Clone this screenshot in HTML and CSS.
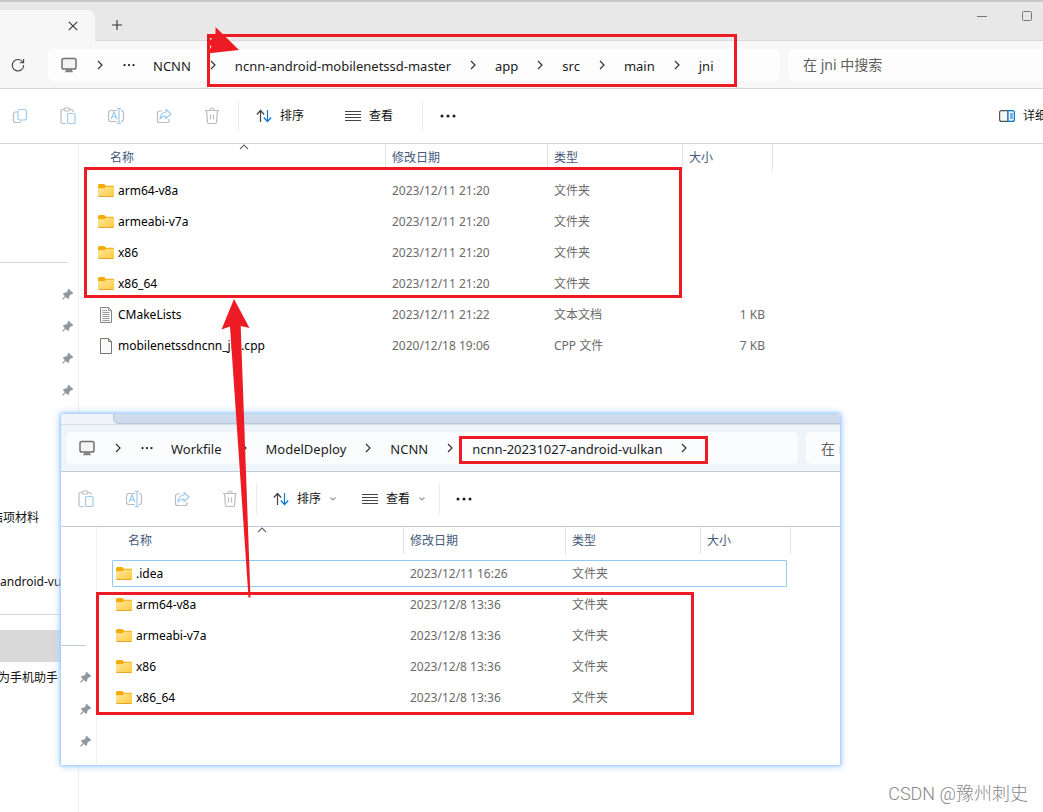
FILE: index.html
```
<!DOCTYPE html>
<html lang="zh-CN">
<head>
<meta charset="utf-8">
<title>jni</title>
<link rel="stylesheet" href="styles.css">
</head>
<body>
<svg class="sprite" aria-hidden="true">
  <defs>
    <linearGradient id="folderFill" x1="0" y1="0" x2="1" y2="1"><stop offset="0" stop-color="#ffe9a0"/><stop offset="1" stop-color="#ffc83a"/></linearGradient>
  </defs>
  <symbol id="chev" viewBox="0 0 8 10"><path d="M2 1l4 4-4 4" fill="none" stroke="#333" stroke-width="1.2"/></symbol>
  <symbol id="down" viewBox="0 0 8 6"><path d="M1.500 1.500l2.500 2.500 2.500-2.500" fill="none" stroke="#999" stroke-width="1.100"/></symbol>
  <symbol id="up" viewBox="0 0 10 6"><path d="M1 5l4-4 4 4" fill="none" stroke="#666" stroke-width="1.100"/></symbol>
  <symbol id="dots" viewBox="0 0 16 4"><g fill="#1c1c1c"><circle cx="2" cy="2" r="1.500"/><circle cx="8" cy="2" r="1.500"/><circle cx="14" cy="2" r="1.500"/></g></symbol>
  <symbol id="monitor" viewBox="0 0 16 16"><rect x="1" y="1.500" width="14" height="10.500" rx="1.800" fill="#f4f4f4" stroke="#707070" stroke-width="1.500"/><path d="M5.500 12.500h5v2h-5zM4 14.800h8" fill="#8a8a8a" stroke="#808080" stroke-width="1.100"/></symbol>
  <symbol id="refresh" viewBox="0 0 14 14"><path d="M12 4.500A5.700 5.700 0 1 0 12.700 7M12.600 1v3.800H8.800" fill="none" stroke="#444" stroke-width="1.100"/></symbol>
  <symbol id="close" viewBox="0 0 10 10"><path d="M.8.8l8.400 8.400M9.200.8L.8 9.200" stroke="#333" stroke-width="1.100"/></symbol>
  <symbol id="plus" viewBox="0 0 10 10"><path d="M5 0v10M0 5h10" stroke="#333" stroke-width="1.100"/></symbol>
  <symbol id="copy" viewBox="0 0 16 16"><path d="M5 4H3.500a2 2 0 0 0-2 2v6.500a2 2 0 0 0 2 2H7a2 2 0 0 0 2-1.800" fill="none" stroke="#bcbcbc" stroke-width="1.200"/><rect x="6" y="1.500" width="8.500" height="10.500" rx="2" fill="#fff" stroke="#9ccbee" stroke-width="1.200"/></symbol>
  <symbol id="paste" viewBox="0 0 16 18"><path d="M6 16.500H2.500A1.500 1.500 0 0 1 1 15V4a1.500 1.500 0 0 1 1.500-1.500h9A1.500 1.500 0 0 1 13 4v1" fill="none" stroke="#bcbcbc" stroke-width="1.200"/><rect x="4" y="1" width="6" height="3" rx="1.500" fill="#fff" stroke="#bcbcbc" stroke-width="1.200"/><rect x="7.500" y="6.500" width="7.500" height="10" rx="1.300" fill="#fff" stroke="#9ccbee" stroke-width="1.200"/></symbol>
  <symbol id="rename" viewBox="0 0 18 18"><path d="M10 3.500H4a2.500 2.500 0 0 0-2.500 2.500v6A2.500 2.500 0 0 0 4 14.500h6M14 3.500a2.500 2.500 0 0 1 2.500 2.500v6a2.500 2.500 0 0 1-2.500 2.500" fill="none" stroke="#bcbcbc" stroke-width="1.200"/><path d="M4 12l3-7 3 7M5.200 9.800h3.600M12 1.500v15M9.800 1.500h4.400M9.800 16.500h4.400" fill="none" stroke="#9ccbee" stroke-width="1.200"/></symbol>
  <symbol id="share" viewBox="0 0 16 16"><path d="M6 3H3.500A2 2 0 0 0 1.500 5v7.500a2 2 0 0 0 2 2h7.500a2 2 0 0 0 2-2V11" fill="none" stroke="#bcbcbc" stroke-width="1.200"/><path d="M10 1.500l5 4.500-5 4.500V8C7 8 5.500 9 4 11c.3-4 2.300-6.700 6-7z" fill="#fff" stroke="#9ccbee" stroke-width="1.200" stroke-linejoin="round"/></symbol>
  <symbol id="trash" viewBox="0 0 16 18"><path d="M1 3.500h14M2.500 3.500l1 11.500a1.500 1.500 0 0 0 1.500 1.500h6a1.500 1.500 0 0 0 1.500-1.500l1-11.500M6 3a2 2 0 0 1 4 0M6.500 7.500v5M9.500 7.500v5" fill="none" stroke="#bcbcbc" stroke-width="1.200"/></symbol>
  <symbol id="sort" viewBox="0 0 16 14"><path d="M4.500 13V2M.8 5.500L4.500 1.500l3.700 4" fill="none" stroke="#444" stroke-width="1.200"/><path d="M11.500 1v11M7.800 8.500l3.700 4 3.700-4" fill="none" stroke="#0a78d0" stroke-width="1.200"/></symbol>
  <symbol id="view" viewBox="0 0 16 12"><path d="M0 1.500h16M0 4.500h16M0 7.500h16M0 10.500h16" stroke="#444"/></symbol>
  <symbol id="pane" viewBox="0 0 16 12"><path d="M9 .600H2.600a2 2 0 0 0-2 2v6.800a2 2 0 0 0 2 2H9z" fill="#f6f6f6" stroke="#555" stroke-width="1.200"/><path d="M9 .600h4.400a2 2 0 0 1 2 2v6.800a2 2 0 0 1-2 2H9z" fill="#e6f3fd" stroke="#0a78d0" stroke-width="1.200"/><path d="M11 4h3M11 6h3M11 8h3" stroke="#0a78d0"/></symbol>
  <symbol id="pin" viewBox="0 0 12 12"><path d="M6.500 1L11 5.200 9.800 6 8.900 5.900 7 8.100 6.800 10 5.900 10.700 3.800 8.600 1 11.400.5 11 3.200 8 1.200 6 2 5.100 4 5 6.100 3.200 5.800 2z" fill="#8c979f" stroke="#8c979f" stroke-width=".6"/></symbol>
  <symbol id="folder" viewBox="0 0 16 14"><path d="M0 1.500A1.500 1.500 0 0 1 1.500 0h4.700L8 1.700h7a1 1 0 0 1 1 1V5H0z" fill="#f3ac0b"/><path d="M0 4.300h6.500l1.600-1.500H16v9a1.200 1.200 0 0 1-1.200 1.200H1.200A1.200 1.200 0 0 1 0 11.800z" fill="url(#folderFill)"/><path d="M.5 12.500h15" stroke="#e5a52d"/></symbol>
  <symbol id="text" viewBox="0 0 12 16"><path d="M.500.500h8l3 3v12H.500z" fill="#f9f9f9" stroke="#858585"/><path d="M8.500.500v3h3M2.500 3.500H7M2.500 5.500h7M2.500 7.500h7M2.500 9.500h7M2.500 11.500h7M2.500 13.500h7" fill="none" stroke="#9a9a9a"/></symbol>
  <symbol id="file" viewBox="0 0 12 16"><path d="M.500.500h8l3 3v12H.500z" fill="#fbfbfb" stroke="#77776f"/><path d="M8.500.500v3h3" fill="none" stroke="#77776f"/></symbol>
</svg>

<main class="desktop">
  <section class="window" aria-label="jni">
    <header class="titlebar">
      <div class="tab"><button class="plain" aria-label="关闭标签页"><svg width="10" height="10"><use href="#close"/></svg></button></div>
      <button class="plain new-tab" aria-label="新标签页"><svg width="10" height="10"><use href="#plus"/></svg></button>
      <div class="controls">
        <button class="plain" aria-label="最小化"><svg width="10" height="10"><path d="M0 5.500h10" stroke="#777"/></svg></button>
        <button class="plain" aria-label="最大化"><svg width="10" height="10"><rect x=".5" y=".5" width="9" height="9" rx="1" fill="none" stroke="#777"/></svg></button>
      </div>
    </header>
    <div class="addressbar">
      <button class="plain refresh" aria-label="刷新"><svg width="14" height="14"><use href="#refresh"/></svg></button>
      <nav class="crumbs" aria-label="路径">
        <svg width="16" height="16"><use href="#monitor"/></svg>
        <svg class="chev root" width="8" height="10"><use href="#chev"/></svg>
        <button class="plain more" aria-label="更多路径"><svg width="12" height="4"><use href="#dots"/></svg></button>
        <a href="#">NCNN</a><svg class="chev" width="8" height="10"><use href="#chev"/></svg>
        <a href="#">ncnn-android-mobilenetssd-master</a><svg class="chev" width="8" height="10"><use href="#chev"/></svg>
        <a href="#">app</a><svg class="chev" width="8" height="10"><use href="#chev"/></svg>
        <a href="#">src</a><svg class="chev" width="8" height="10"><use href="#chev"/></svg>
        <a href="#">main</a><svg class="chev" width="8" height="10"><use href="#chev"/></svg>
        <a href="#">jni</a>
      </nav>
      <input class="search" type="text" aria-label="搜索" placeholder="在 jni 中搜索">
    </div>
    <div class="toolbar">
      <button class="tool" aria-label="复制"><svg width="16" height="16"><use href="#copy"/></svg></button>
      <button class="tool" aria-label="粘贴"><svg width="16" height="18"><use href="#paste"/></svg></button>
      <button class="tool" aria-label="重命名"><svg width="18" height="18"><use href="#rename"/></svg></button>
      <button class="tool" aria-label="共享"><svg width="16" height="16"><use href="#share"/></svg></button>
      <button class="tool" aria-label="删除"><svg width="16" height="18"><use href="#trash"/></svg></button>
      <span class="divider"></span>
      <button class="menu"><svg width="16" height="14"><use href="#sort"/></svg>排序<span class="drop"></span></button>
      <button class="menu"><svg width="16" height="12"><use href="#view"/></svg>查看<span class="drop last"></span></button>
      <span class="divider"></span>
      <button class="menu" aria-label="更多"><svg width="16" height="4"><use href="#dots"/></svg></button>
      <button class="menu details"><svg width="16" height="12"><use href="#pane"/></svg>详细信息</button>
    </div>
    <div class="content">
      <aside class="sidebar">
        <div class="blank"></div>
        <div class="rule short"></div>
        <div class="side-item"><svg width="12" height="12"><use href="#pin"/></svg></div>
        <div class="side-item"><svg width="12" height="12"><use href="#pin"/></svg></div>
        <div class="side-item"><svg width="12" height="12"><use href="#pin"/></svg></div>
        <div class="side-item"><svg width="12" height="12"><use href="#pin"/></svg></div>
        <div class="side-item"></div>
        <div class="side-item"></div>
        <div class="side-item"></div>
        <div class="side-item label narrow"><span>结项材料</span></div>
        <div class="side-item"></div>
        <div class="side-item label"><span>android-vulkan</span></div>
        <div class="rule"></div>
        <div class="side-item selected"></div>
        <div class="side-item label wide"><span>华为手机助手</span></div>
      </aside>
      <table class="files">
        <thead>
          <tr><th class="name">名称<svg class="sorted" width="10" height="6"><use href="#up"/></svg></th><th class="date">修改日期</th><th class="type">类型</th><th class="size">大小</th></tr>
        </thead>
        <tbody>
          <tr><td class="name"><span><svg width="16" height="14"><use href="#folder"/></svg>arm64-v8a</span></td><td>2023/12/11 21:20</td><td>文件夹</td><td></td></tr>
          <tr><td class="name"><span><svg width="16" height="14"><use href="#folder"/></svg>armeabi-v7a</span></td><td>2023/12/11 21:20</td><td>文件夹</td><td></td></tr>
          <tr><td class="name"><span><svg width="16" height="14"><use href="#folder"/></svg>x86</span></td><td>2023/12/11 21:20</td><td>文件夹</td><td></td></tr>
          <tr><td class="name"><span><svg width="16" height="14"><use href="#folder"/></svg>x86_64</span></td><td>2023/12/11 21:20</td><td>文件夹</td><td></td></tr>
          <tr><td class="name"><span><svg width="16" height="16"><use href="#text"/></svg>CMakeLists</span></td><td>2023/12/11 21:22</td><td>文本文档</td><td class="kb">1 KB</td></tr>
          <tr><td class="name"><span><svg width="16" height="16"><use href="#file"/></svg>mobilenetssdncnn_jni.cpp</span></td><td>2020/12/18 19:06</td><td>CPP 文件</td><td class="kb">7 KB</td></tr>
        </tbody>
      </table>
    </div>
  </section>

  <section class="window front" aria-label="ncnn-20231027-android-vulkan">
    <header class="titlebar"><div class="tab"></div><div class="strip"></div></header>
    <div class="addressbar">
      <nav class="crumbs" aria-label="路径">
        <svg width="16" height="16"><use href="#monitor"/></svg>
        <svg class="chev root" width="8" height="10"><use href="#chev"/></svg>
        <button class="plain more" aria-label="更多路径"><svg width="12" height="4"><use href="#dots"/></svg></button>
        <a href="#">Workfile</a><svg class="chev" width="8" height="10"><use href="#chev"/></svg>
        <a href="#">ModelDeploy</a><svg class="chev" width="8" height="10"><use href="#chev"/></svg>
        <a href="#">NCNN</a><svg class="chev" width="8" height="10"><use href="#chev"/></svg>
        <a href="#">ncnn-20231027-android-vulkan</a><svg class="chev" width="8" height="10"><use href="#chev"/></svg>
      </nav>
      <input class="search" type="text" aria-label="搜索" placeholder="在 ncnn 中搜索">
    </div>
    <div class="toolbar">
      <button class="tool" aria-label="粘贴"><svg width="16" height="18"><use href="#paste"/></svg></button>
      <button class="tool" aria-label="重命名"><svg width="18" height="18"><use href="#rename"/></svg></button>
      <button class="tool" aria-label="共享"><svg width="16" height="16"><use href="#share"/></svg></button>
      <button class="tool" aria-label="删除"><svg width="16" height="18"><use href="#trash"/></svg></button>
      <span class="divider"></span>
      <button class="menu"><svg width="16" height="14"><use href="#sort"/></svg>排序<span class="drop"><svg width="8" height="6"><use href="#down"/></svg></span></button>
      <button class="menu"><svg width="16" height="12"><use href="#view"/></svg>查看<span class="drop last"><svg width="8" height="6"><use href="#down"/></svg></span></button>
      <span class="divider"></span>
      <button class="menu" aria-label="更多"><svg width="16" height="4"><use href="#dots"/></svg></button>
    </div>
    <div class="content">
      <aside class="sidebar">
        <div class="blank"></div>
        <div class="rule short"></div>
        <div class="side-item"><svg width="12" height="12"><use href="#pin"/></svg></div>
        <div class="side-item"><svg width="12" height="12"><use href="#pin"/></svg></div>
        <div class="side-item"><svg width="12" height="12"><use href="#pin"/></svg></div>
      </aside>
      <table class="files">
        <thead>
          <tr><th class="name">名称<svg class="sorted" width="10" height="6"><use href="#up"/></svg></th><th class="date">修改日期</th><th class="type">类型</th><th class="size">大小</th></tr>
        </thead>
        <tbody>
          <tr class="focused"><td class="name"><span><svg width="16" height="14"><use href="#folder"/></svg>.idea</span></td><td>2023/12/11 16:26</td><td>文件夹</td><td></td></tr>
          <tr><td class="name"><span><svg width="16" height="14"><use href="#folder"/></svg>arm64-v8a</span></td><td>2023/12/8 13:36</td><td>文件夹</td><td></td></tr>
          <tr><td class="name"><span><svg width="16" height="14"><use href="#folder"/></svg>armeabi-v7a</span></td><td>2023/12/8 13:36</td><td>文件夹</td><td></td></tr>
          <tr><td class="name"><span><svg width="16" height="14"><use href="#folder"/></svg>x86</span></td><td>2023/12/8 13:36</td><td>文件夹</td><td></td></tr>
          <tr><td class="name"><span><svg width="16" height="14"><use href="#folder"/></svg>x86_64</span></td><td>2023/12/8 13:36</td><td>文件夹</td><td></td></tr>
        </tbody>
      </table>
    </div>
  </section>

  <svg class="marks" width="1043" height="812" aria-hidden="true">
    <g fill="none" stroke="#ed1c24" stroke-width="3">
      <rect x="208.500" y="35.500" width="527" height="50"/>
      <rect x="85.500" y="168.500" width="595" height="128"/>
      <rect x="460.500" y="437.500" width="246" height="25"/>
      <rect x="97.500" y="593.500" width="595" height="120"/>
    </g>
    <path d="M215.500 27L239 50 207 53.500V36h8.500z" fill="#ed1c24"/>
    <path d="M210 38h2l-1.500 2.500zM210 45l1.500 1.500L210 49z" fill="#fff"/>
    <path d="M234 299l15.500 29-8.800-2L250.500 597.500h-2L230 326.500l-8.500 3z" fill="#ed1c24"/>
  </svg>
  <p class="watermark">CSDN @豫州刺史</p>
</main>
</body>
</html>
```
FILE: styles.css
```
* { box-sizing: border-box; }

body {
  margin: 0;
  font: 12px/18px "Noto Sans", "Noto Sans CJK SC", sans-serif;
  color: #111;
  background: #fff;
}

.sprite { position: absolute; width: 0; height: 0; }

svg { display: block; flex: none; }

button {
  display: flex;
  align-items: center;
  padding: 0;
  border: 0;
  background: none;
  font: inherit;
  color: inherit;
}

.desktop {
  position: relative;
  display: flex;
  min-height: 100vh;
  overflow: hidden;
}

.window {
  flex: 1;
  min-width: 0;
  display: flex;
  flex-direction: column;
  background: #fff;
  --line: #d6d6d6;
}

.titlebar {
  display: flex;
  height: 41px;
  border-top: 2px solid #c6c8c6;
  border-bottom: 1px solid #d9d9d9;
  background: #e8e8e8;
}

.tab {
  display: flex;
  align-items: center;
  justify-content: flex-end;
  width: 95px;
  margin: 8px 0 -1px;
  padding-right: 17px;
  border-radius: 0 8px 0 0;
  background: #f7f7f7;
}

.new-tab { margin: 8px 0 0 17px; }

.controls {
  display: flex;
  gap: 35px;
  align-items: flex-start;
  margin-left: auto;
  padding: 9px 11px 0 0;
}

.addressbar {
  display: flex;
  align-items: center;
  gap: 8px;
  height: 48px;
  border-bottom: 1px solid var(--line);
  background: #f7f7f7;
}

.refresh { width: 40px; padding-left: 11px; }

.crumbs {
  display: flex;
  align-items: center;
  width: 732px;
  height: 32px;
  padding-left: 13px;
  border-radius: 5px;
  background: #fdfdfd;
  font-size: 13px;
  white-space: nowrap;
}

.crumbs a { padding-top: 2px; color: #1c1c1c; text-decoration: none; }

.chev { margin: 0 18px; }
.chev.root { margin: 0 19px; }
.more { margin-right: 18px; }

.search {
  flex: 1;
  min-width: 0;
  height: 32px;
  padding: 0 0 0 15px;
  border: 0;
  border-radius: 5px 0 0 5px;
  background: #fdfdfd;
  font: inherit;
  font-size: 14px;
}

.search::placeholder { color: #5f5f5f; opacity: 1; }

.toolbar {
  display: flex;
  align-items: center;
  height: 55px;
  border-bottom: 1px solid var(--line);
  background: #fff;
  overflow: hidden;
}

.tool {
  flex: none;
  justify-content: center;
  width: 48px;
  height: 32px;
}

.tool:first-child { width: 44px; padding-right: 4px; }

.divider {
  width: 1px;
  height: 32px;
  margin-right: 17px;
  background: #ebebeb;
}

.tool + .divider { margin-left: 2px; }

.menu { flex: none; gap: 8px; white-space: nowrap; }

.drop { width: 33px; }
.drop.last { width: 21px; }

.details { width: 44px; margin-left: auto; }

.content { flex: 1; display: flex; }

.sidebar {
  flex: none;
  width: 79px;
  border-right: 1px solid #f0f0f0;
  overflow: hidden;
}

.blank { height: 102px; }

.rule {
  height: 1px;
  margin: 16px 0 15px;
  background: var(--line);
}

.short { margin-right: 10px; }

.side-item {
  display: flex;
  align-items: center;
  justify-content: flex-end;
  height: 32px;
  padding-right: 4px;
}

.label {
  justify-content: flex-start;
  white-space: nowrap;
  overflow: hidden;
}

.narrow, .wide { justify-content: flex-end; width: 39px; padding: 0; }
.wide { width: 58px; }
.selected { background: #d9d9d9; }

.files {
  align-self: flex-start;
  width: 694px;
  border-spacing: 0;
  table-layout: fixed;
}

.files th {
  height: 27px;
  padding: 0 0 0 6px;
  border-right: 1px solid #e2e2e2;
  font-weight: 400;
  text-align: left;
  color: #44597a;
}

.files th.name { position: relative; width: 307px; padding-left: 31px; }
.files .date { width: 162px; }
.files .type { width: 135px; }
.files .size { width: 90px; }

.sorted { position: absolute; left: 160px; top: 0; }

.files tbody::before { content: ""; display: block; height: 4px; }

.files td {
  height: 31px;
  padding: 0 0 0 6px;
  color: #6b6b6b;
}

.files td.name { padding-left: 15px; color: #000; }

.name span {
  display: flex;
  align-items: center;
  gap: 4px;
  height: 27px;
  padding-left: 4px;
}

.files td.kb { padding-right: 8px; text-align: right; }

.focused { position: relative; }

.focused::after {
  content: "";
  position: absolute;
  inset: 2px 4px 2px 15px;
  border: 1px solid #91c9f7;
  border-radius: 1px;
}

.front {
  position: absolute;
  left: 61px;
  top: 414px;
  width: 779px;
  height: 351px;
  overflow: hidden;
  border-radius: 2px 2px 0 0;
  box-shadow: 0 0 3px 1px #9cc9fb, 0 0 9px 1px #b5d6fd;
  --line: #c0cbdb;
}

.front .titlebar { height: 11px; border-top: 0; border-bottom: 1px solid #d5dfec; background: #f1f5fb; }
.front .tab { width: 52px; margin: 0; padding: 0; background: none; }
.strip { flex: 1; border: 1px solid #b9c7d9; border-width: 0 0 1px 1px; border-radius: 0 0 0 5px; background: #cfdbea; }
.front .addressbar { height: 47px; padding-left: 5px; background: #eff4f9; }
.front .crumbs, .front .search { background: #fbfcfe; }
.front .crumbs { flex: none; }
.front .tool:first-child { width: 49px; padding: 0 0 0 1px; }
.front .divider { margin-right: 16px; }
.front .sidebar { width: 36px; }

.marks { position: absolute; left: 0; top: 0; }

.watermark {
  position: absolute;
  right: 15px;
  bottom: 6px;
  margin: 0;
  font: 18px/24px Roboto, "Noto Sans CJK SC", sans-serif;
  font-weight: 300;
  color: #8a8a8a;
}
```
